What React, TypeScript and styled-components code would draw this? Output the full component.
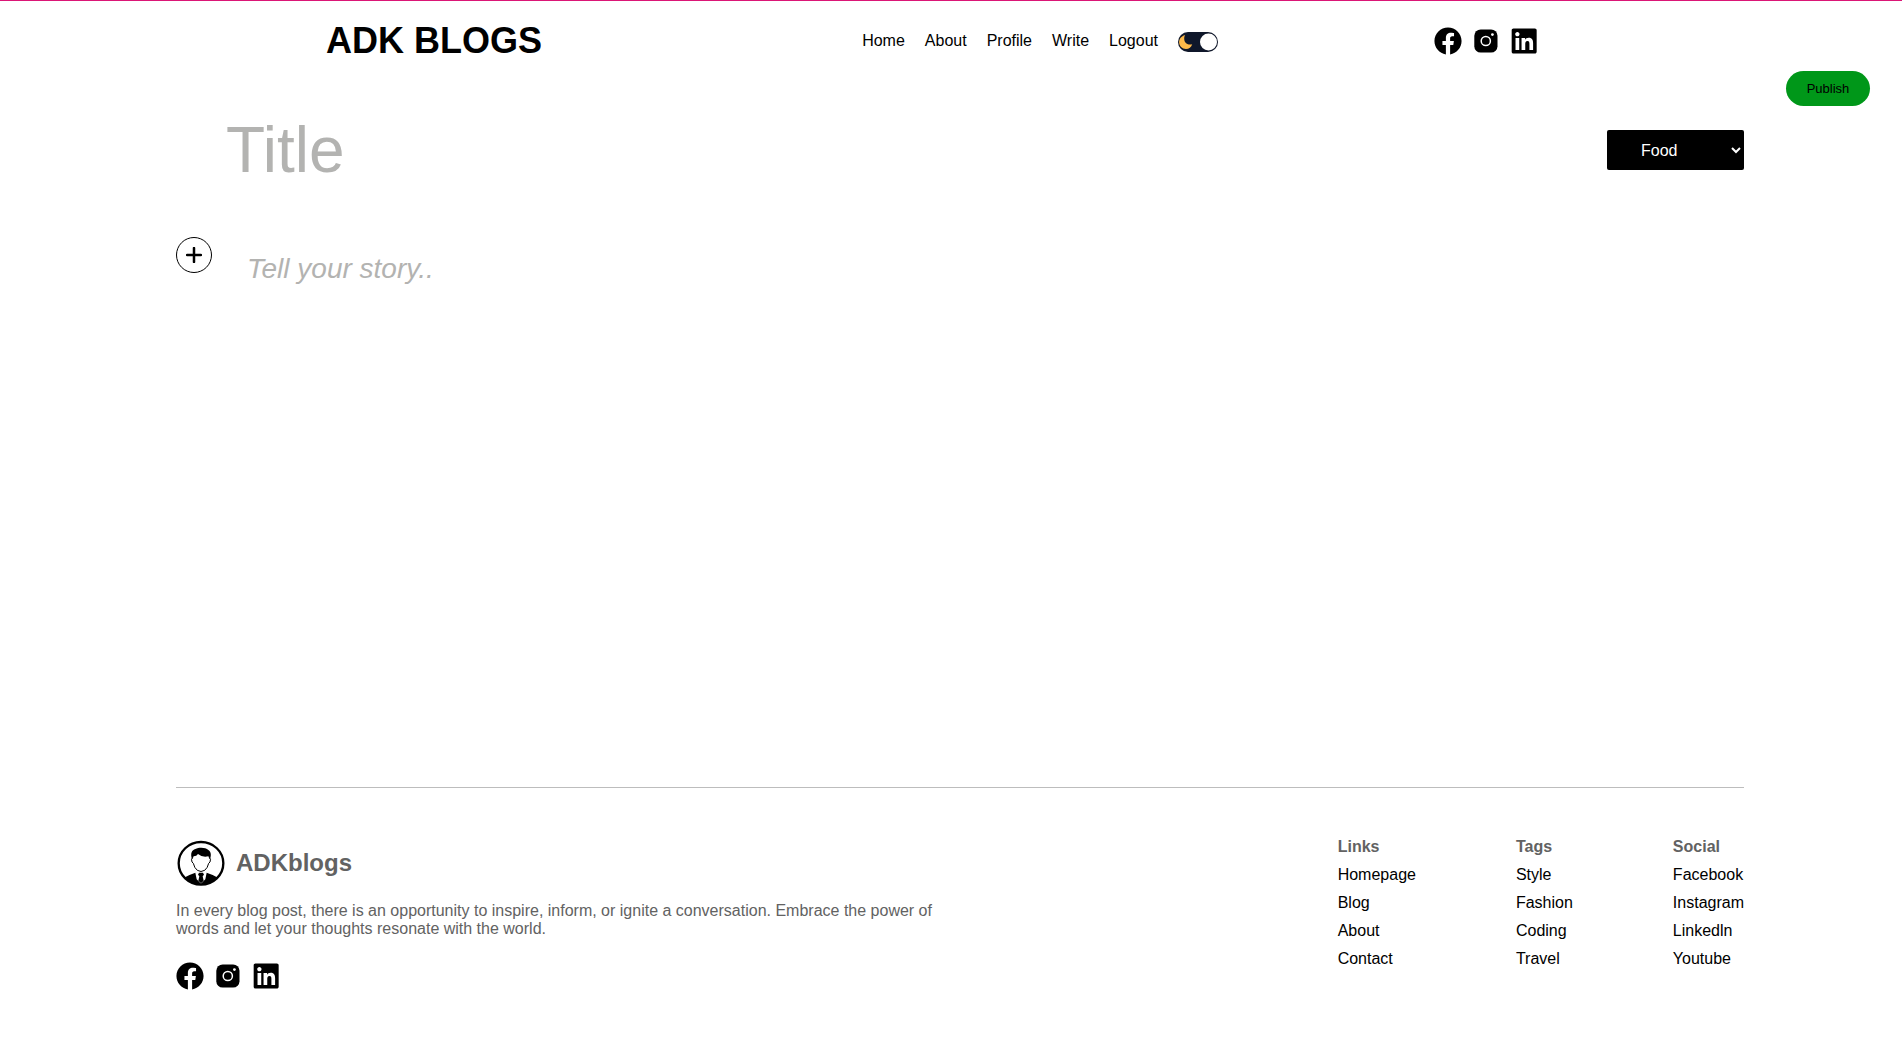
import React, { useState } from "react";
import styled, { createGlobalStyle } from "styled-components";

const GlobalStyle = createGlobalStyle`
  * { box-sizing: border-box; margin: 0; padding: 0; }
  body {
    background: #fff;
    color: #000;
    font-family: "Liberation Sans", Arial, sans-serif;
    font-size: 16px;
    line-height: 18px;
  }
  a { color: inherit; text-decoration: none; }
`;

const Page = styled.div`
  display: flex;
  flex-direction: column;
  min-height: 100vh;
  border-top: 1px solid #db1676;
`;

const Header = styled.header`
  display: grid;
  grid-template-columns: 1fr auto auto;
  align-items: center;
  column-gap: 216px;
  height: 70px;
  padding: 10px 364px 0 326px;
`;

const Logo = styled.a`
  font-size: 36px;
  line-height: 42px;
  font-weight: 700;
`;

const Nav = styled.nav`
  display: flex;
  align-items: center;
  gap: 20px;
`;

const Toggle = styled.label`
  display: flex;
  align-items: center;
  position: relative;
  width: 40px;
  height: 20px;
  margin-top: 2px;
  cursor: pointer;
  svg { display: block; }
`;

const ToggleInput = styled.input`
  position: absolute;
  inset: 0;
  opacity: 0;
  width: 100%;
  height: 100%;
`;

const SocialRow = styled.div`
  display: flex;
  gap: 10px;
`;

const SocialLink = styled.a`
  display: block;
  width: 28px;
  height: 28px;
  svg { display: block; width: 100%; height: 100%; }
`;

const Actions = styled.div`
  display: flex;
  justify-content: flex-end;
  padding-right: 32px;
`;

const Publish = styled.button`
  min-width: 84px;
  height: 35px;
  padding: 0 20px;
  border: 0;
  border-radius: 20px;
  background: #009719;
  color: #000;
  font-family: inherit;
  font-size: 13px;
  cursor: pointer;
`;

const Content = styled.div`
  display: flex;
  flex-direction: column;
  flex: 1;
  padding: 0 158px 0 176px;
`;

const Editor = styled.main`
  flex: 1;
`;

const TitleRow = styled.div`
  display: flex;
  align-items: center;
  justify-content: space-between;
  padding: 8px 0 0 50px;
`;

const TitleInput = styled.input`
  flex: 1;
  min-width: 0;
  height: 72px;
  border: 0;
  outline: 0;
  background: transparent;
  font-family: inherit;
  font-size: 64px;
  &::placeholder { color: #b3b3b1; opacity: 1; }
`;

const Category = styled.select`
  width: 137px;
  height: 40px;
  padding: 0 0 0 30px;
  border: 0;
  border-radius: 2px;
  background: #000;
  color: #fff;
  font-family: inherit;
  font-size: 16px;
`;

const StoryRow = styled.div`
  display: flex;
  align-items: flex-start;
  gap: 35px;
  margin-top: 51px;
`;

const AddButton = styled.button`
  display: flex;
  align-items: center;
  justify-content: center;
  flex: none;
  width: 36px;
  height: 36px;
  border: 1px solid #000;
  border-radius: 50%;
  background: transparent;
  cursor: pointer;
`;

const Story = styled.textarea`
  flex: 1;
  height: 240px;
  padding-top: 16px;
  border: 0;
  outline: 0;
  resize: none;
  background: transparent;
  font-family: inherit;
  font-size: 28px;
  line-height: 32px;
  &::placeholder { color: #b3b3b1; font-style: italic; opacity: 1; }
`;

const Footer = styled.footer`
  display: flex;
  justify-content: space-between;
  padding: 50px 0 56px;
  border-top: 1px solid #bdbdbd;
  color: #626262;
`;

const About = styled.section`
  display: flex;
  flex-direction: column;
  gap: 14px;
  width: 50%;
`;

const Brand = styled.div`
  display: flex;
  align-items: center;
  gap: 10px;
`;

const BrandName = styled.h2`
  font-size: 24px;
  line-height: 28px;
`;

const FooterSocial = styled.div`
  padding-top: 10px;
`;

const Columns = styled.div`
  display: flex;
  gap: 100px;
`;

const Column = styled.div`
  display: flex;
  flex-direction: column;
  gap: 10px;
`;

const ColumnTitle = styled.h3`
  font-size: 16px;
  line-height: 18px;
`;

const ColumnLink = styled.a`
  color: #000;
`;

const FacebookIcon = () => (
  <svg viewBox="0 0 512 512" aria-hidden="true">
    <path d="M504 256C504 119 393 8 256 8S8 119 8 256c0 123.78 90.69 226.38 209.25 245V327.69h-63V256h63v-54.64c0-62.15 37-96.48 93.67-96.48 27.14 0 55.52 4.84 55.52 4.84v61h-31.28c-30.8 0-40.41 19.12-40.41 38.73V256h68.78l-11 71.69h-57.78V501C413.31 482.38 504 379.78 504 256z" />
  </svg>
);

const InstagramIcon = () => (
  <svg viewBox="0 0 28 28" aria-hidden="true">
    <rect x="2.3" y="2.4" width="23.2" height="23.2" rx="6.4" />
    <circle cx="13.8" cy="14" r="4.6" fill="none" stroke="#fff" strokeWidth="1.5" />
    <circle cx="20.4" cy="7.6" r="1.4" fill="#fff" />
  </svg>
);

const LinkedinIcon = () => (
  <svg viewBox="-30 5 502 502" aria-hidden="true">
    <path d="M416 32H31.9C14.3 32 0 46.5 0 64.3v383.4C0 465.5 14.3 480 31.9 480H416c17.6 0 32-14.5 32-32.3V64.3c0-17.8-14.4-32.3-32-32.3zM135.4 416H69V202.2h66.5V416zm-33.2-243c-21.3 0-38.5-17.3-38.5-38.5S80.9 96 102.2 96c21.2 0 38.5 17.3 38.5 38.5 0 21.3-17.2 38.5-38.5 38.5zm282.1 243h-66.4V312c0-24.8-.5-56.7-34.5-56.7-34.6 0-39.9 27-39.9 54.9V416h-66.4V202.2h63.7v29.2h.9c8.9-16.8 30.6-34.5 62.9-34.5 67.2 0 79.7 44.3 79.7 101.9V416z" />
  </svg>
);

const PlusIcon = () => (
  <svg width="16" height="16" viewBox="0 0 16 16" aria-hidden="true">
    <path d="M8 1v14M1 8h14" stroke="#000" strokeWidth="2.5" strokeLinecap="round" />
  </svg>
);

const ThemeSwitch = () => {
  const [light, setLight] = useState(true);
  return (
    <Toggle>
      <ToggleInput
        type="checkbox"
        aria-label="Toggle theme"
        checked={light}
        onChange={() => setLight(!light)}
      />
      <svg width="40" height="20" viewBox="0 0 40 20" aria-hidden="true">
        <rect width="40" height="20" rx="10" fill="#0f172a" />
        <path
          d="M7 3C3.300 4.200 1.100 7 1.100 10.300C1.100 14 4.200 17 8 17C11 17 13.300 15 14.200 12.200C10.500 13.400 6.700 11.500 6.300 7.800C6.100 6 6.300 4.500 7 3z"
          fill="#fdb94a"
        />
        <circle cx={light ? 30.5 : 9.5} cy="10" r="8.500" fill="#fff" />
      </svg>
    </Toggle>
  );
};

const Avatar = () => (
  <svg width="50" height="50" viewBox="0 0 150 150" aria-hidden="true">
    <defs>
      <clipPath id="badge">
        <ellipse cx="75" cy="76" rx="67" ry="64" />
      </clipPath>
    </defs>
    <g clipPath="url(#badge)">
      <path d="M14 150L24 119Q40 110 58 104L62 124L75 137L88 124L92 104Q111 110 126 119L138 150Z" />
    </g>
    <path d="M69 104h12l3 6-4 5 3 13-8 8-8-8 3-13-4-5z" />
    <ellipse cx="75" cy="76" rx="67" ry="64" fill="none" stroke="#000" strokeWidth="7" />
    <path
      d="M50 59Q44 62 48 72L52 76Q55 90 64 97Q75 104 86 97Q95 90 98 76L102 72Q106 62 100 59"
      fill="#fff"
      stroke="#000"
      strokeWidth="3"
    />
    <path d="M48 64C42 45 48 36 58 33C70 27 89 28 97 36C106 42 106 53 102 64L97 55Q79 59 66 48Q62 55 53 55Z" />
  </svg>
);

const SocialIcons = () => (
  <SocialRow>
    <SocialLink href="#facebook" aria-label="Facebook"><FacebookIcon /></SocialLink>
    <SocialLink href="#instagram" aria-label="Instagram"><InstagramIcon /></SocialLink>
    <SocialLink href="#linkedin" aria-label="LinkedIn"><LinkedinIcon /></SocialLink>
  </SocialRow>
);

const navItems = ["Home", "About", "Profile", "Write", "Logout"];
const categories = ["Food", "Style", "Fashion", "Coding", "Travel"];
const columns = [
  { title: "Links", items: ["Homepage", "Blog", "About", "Contact"] },
  { title: "Tags", items: ["Style", "Fashion", "Coding", "Travel"] },
  { title: "Social", items: ["Facebook", "Instagram", "Linkedln", "Youtube"] },
];

export default function App() {
  return (
    <>
      <GlobalStyle />
      <Page>
        <Header>
          <Logo href="#home">ADK BLOGS</Logo>
          <Nav>
            {navItems.map((item) => (
              <a key={item} href={`#${item.toLowerCase()}`}>{item}</a>
            ))}
            <ThemeSwitch />
          </Nav>
          <SocialIcons />
        </Header>
        <Actions>
          <Publish type="button">Publish</Publish>
        </Actions>
        <Content>
          <Editor>
            <TitleRow>
              <TitleInput type="text" placeholder="Title" aria-label="Title" />
              <Category aria-label="Category" defaultValue="Food">
                {categories.map((name) => (
                  <option key={name}>{name}</option>
                ))}
              </Category>
            </TitleRow>
            <StoryRow>
              <AddButton type="button" aria-label="Add media"><PlusIcon /></AddButton>
              <Story placeholder="Tell your story.." aria-label="Story" />
            </StoryRow>
          </Editor>
          <Footer>
            <About>
              <Brand>
                <Avatar />
                <BrandName>ADKblogs</BrandName>
              </Brand>
              <p>
                In every blog post, there is an opportunity to inspire, inform, or ignite a
                conversation. Embrace the power of words and let your thoughts resonate with the
                world.
              </p>
              <FooterSocial><SocialIcons /></FooterSocial>
            </About>
            <Columns>
              {columns.map((column) => (
                <Column key={column.title}>
                  <ColumnTitle>{column.title}</ColumnTitle>
                  {column.items.map((item) => (
                    <ColumnLink key={item} href={`#${item.toLowerCase()}`}>{item}</ColumnLink>
                  ))}
                </Column>
              ))}
            </Columns>
          </Footer>
        </Content>
      </Page>
    </>
  );
}
